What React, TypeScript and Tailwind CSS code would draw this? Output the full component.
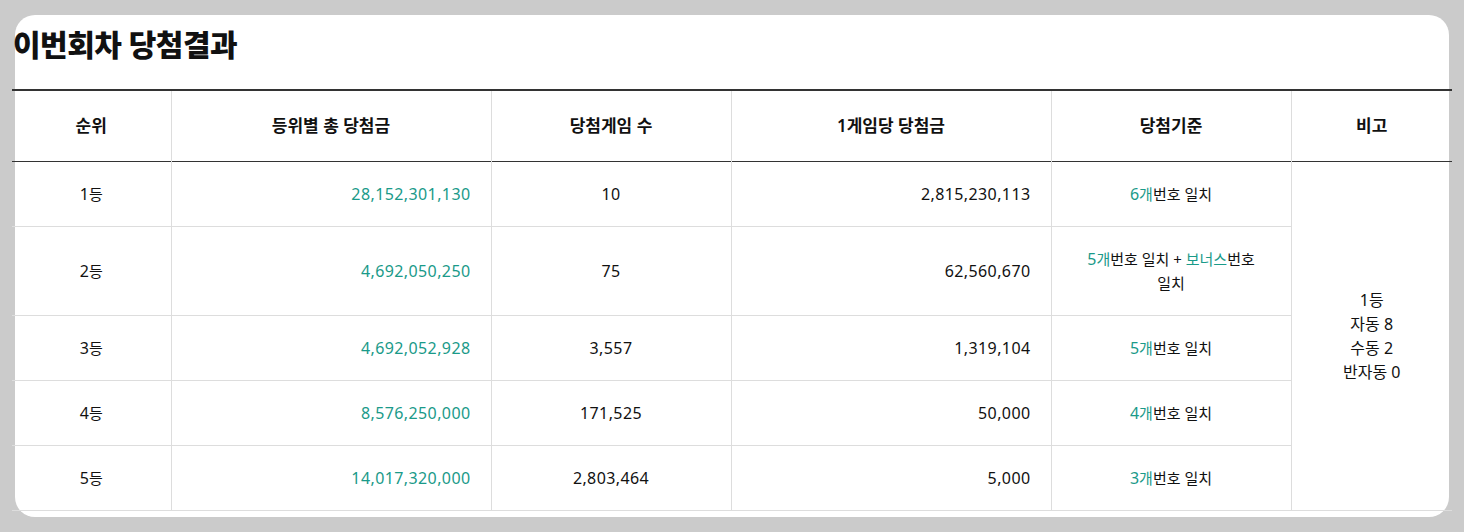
import React from "react";

const teal = "text-[#1a9a89]";
const dg = "text-[16px]";

type Row = {
  rank: string;
  total: string;
  count: string;
  per: string;
  crit: React.ReactNode;
};

const rows: Row[] = [
  {
    rank: "1",
    total: "28,152,301,130",
    count: "10",
    per: "2,815,230,113",
    crit: (
      <>
        <span className={teal}><span className={dg}>6</span>개</span>번호 일치
      </>
    ),
  },
  {
    rank: "2",
    total: "4,692,050,250",
    count: "75",
    per: "62,560,670",
    crit: (
      <>
        <span className={teal}><span className={dg}>5</span>개</span>번호 일치 + <span className={teal}>보너스</span>번호 일치
      </>
    ),
  },
  {
    rank: "3",
    total: "4,692,052,928",
    count: "3,557",
    per: "1,319,104",
    crit: (
      <>
        <span className={teal}><span className={dg}>5</span>개</span>번호 일치
      </>
    ),
  },
  {
    rank: "4",
    total: "8,576,250,000",
    count: "171,525",
    per: "50,000",
    crit: (
      <>
        <span className={teal}><span className={dg}>4</span>개</span>번호 일치
      </>
    ),
  },
  {
    rank: "5",
    total: "14,017,320,000",
    count: "2,803,464",
    per: "5,000",
    crit: (
      <>
        <span className={teal}><span className={dg}>3</span>개</span>번호 일치
      </>
    ),
  },
];

const th =
  "h-[71px] border-l border-[#dddddd] first:border-l-0 text-[17px] font-semibold text-[#111111] align-middle";
const td =
  "py-[20px] leading-[24px] border-l border-t border-[#dddddd] first:border-l-0 text-[15px] text-[#111111] align-middle";
const num = "text-[16px] tracking-[0.4px]";

export default function App() {
  return (
    <div
      className="w-[1464px] h-[532px] bg-[#cbcbcb] p-[15px] overflow-hidden"
      style={{ fontFamily: '"Noto Sans", "Noto Sans CJK KR", sans-serif' }}
    >
      <div className="w-[1434px] h-[502px] bg-white rounded-[20px]">
        <div className="mx-[-3px]">
          <h2 className="pt-[12px] h-[74px] text-[30px] leading-[36px] font-extrabold tracking-[-0.5px] text-[#111111] pl-[1px]">
            이번회차 당첨결과
          </h2>
          <table className="w-[1440px] table-fixed border-collapse border-t-2 border-[#333333] border-b border-b-[#dddddd]">
            <colgroup>
              <col className="w-[159px]" />
              <col className="w-[320px]" />
              <col className="w-[240px]" />
              <col className="w-[320px]" />
              <col className="w-[240px]" />
              <col className="w-[161px]" />
            </colgroup>
            <thead>
              <tr className="border-b border-[#333333]">
                <th className={th}>순위</th>
                <th className={th}>등위별 총 당첨금</th>
                <th className={th}>당첨게임 수</th>
                <th className={th}>1게임당 당첨금</th>
                <th className={th}>당첨기준</th>
                <th className={th}>비고</th>
              </tr>
            </thead>
            <tbody>
              {rows.map((r, i) => (
                <tr key={r.rank} className={i === 0 ? "[&>td]:border-t-0" : ""}>
                  <td className={`${td} text-center`}>
                    <span className={dg}>{r.rank}</span>등
                  </td>
                  <td className={`${td} text-right pr-[20px]`}>
                    <span className={`${teal} ${num}`}>{r.total}</span>
                  </td>
                  <td className={`${td} text-center`}>
                    <span className={num}>{r.count}</span>
                  </td>
                  <td className={`${td} text-right pr-[20px]`}>
                    <span className={num}>{r.per}</span>
                  </td>
                  <td className={`${td} text-center px-[28px] break-keep`}>{r.crit}</td>
                  {i === 0 && (
                    <td
                      rowSpan={5}
                      className="border-l border-[#dddddd] text-center align-middle text-[16px] leading-[24px] text-[#111111]"
                    >
                      1등
                      <br />
                      자동 8
                      <br />
                      수동 2
                      <br />
                      반자동 0
                    </td>
                  )}
                </tr>
              ))}
            </tbody>
          </table>
        </div>
      </div>
    </div>
  );
}
